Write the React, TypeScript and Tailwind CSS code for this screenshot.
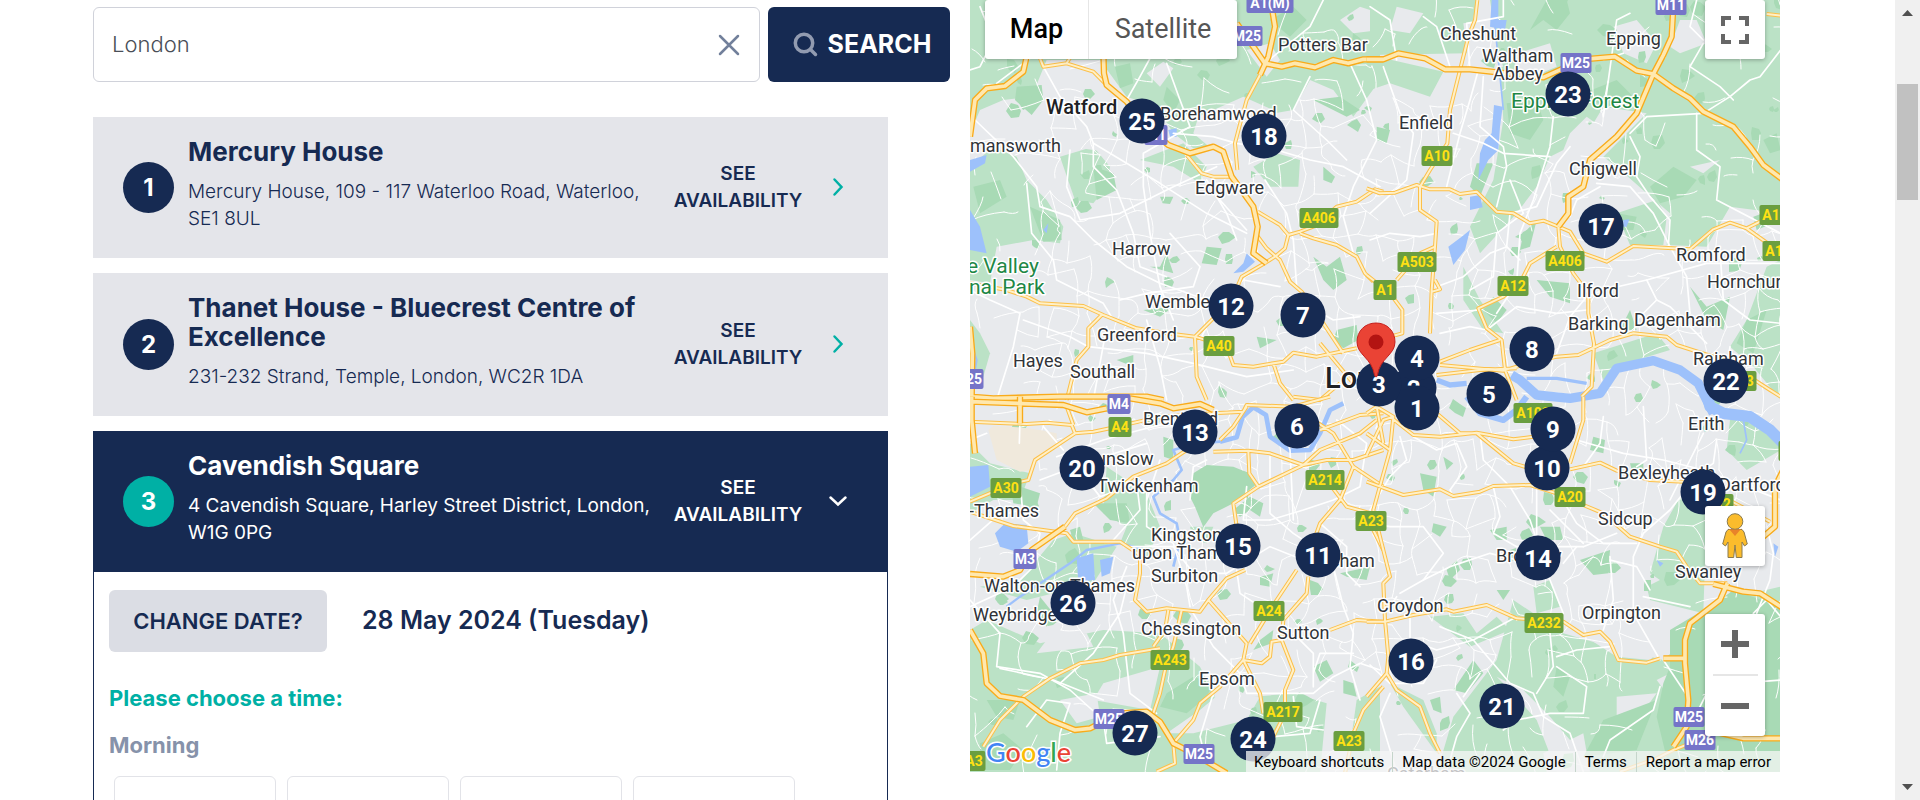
import React, { useState } from "react";

/* ---------- Map geometry ----------
   The map is drawn in four tiles. Tile paths use tile units (3 per map unit). */

type Tile = {
  at: string;
  light: string[];
  urban: string[];
  dark: string[];
  lakes: string[];
  rivers: { d: string; w: number }[];
  streets: string[];
  primary: string[];
  motorway: string[];
};

const TILES: Tile[] = [
  {
    at: "translate(960 0) scale(0.33333)",
    light: [
      "M30 0H1260V240L1180 350L1120 270L1050 240L1000 330L880 350L840 420L780 440L700 445L640 400L590 320L500 290L420 180L260 180L215 290L130 300L60 330L30 400Z",
      "M30 500L100 440L170 470L200 540L260 600L310 680L300 730L220 720L110 740L90 850L30 840Z",
      "M540 480L670 430L740 500L720 550L640 500Z",
      "M880 500L950 460L1020 480L1015 560L930 560Z",
      "M300 470L400 440L450 500L440 560L400 610L345 600Z",
      "M30 960L60 1000L90 1060L70 1130L30 1130Z",
    ],
    urban: [
      "M255 190L390 220L430 260L500 310L540 400L470 460L330 440L290 360L240 330Z",
      "M560 220L610 185L640 205L600 260Z",
      "M715 350L850 290L940 330L1000 400L900 480L840 520L700 400Z",
      "M860 150L930 130L960 180L920 230Z",
      "M1140 60L1200 20L1260 40V90L1180 100Z",
      "M60 360L120 330L140 380L80 420Z",
    ],
    dark: [
      "M170 260L245 255L250 300L215 345L165 300Z",
      "M465 200L510 190L520 250L480 265Z",
      "M210 620L300 660L305 720L250 725Z",
      "M600 590L640 590L630 612L608 610Z",
      "M1060 770L1100 800L1140 770L1160 840L1120 870L1090 840Z",
      "M740 740L785 745L770 795L725 790Z",
      "M1090 500L1125 530L1115 550L1090 540Z",
      "M1130 990L1190 975L1195 1020L1150 1045L1120 1020Z",
      "M400 500L460 520L470 570L410 600Z",
      "M550 930L640 920L600 950Z",
      "M890 1010L950 1020L900 1045Z",
      "M1060 300L1140 290L1200 330L1160 350Z",
      "M640 820L620 760L600 800L570 800Z",
      "M470 1080L520 1065L520 1100Z",
      "M930 60L1000 20L1040 60L990 110Z",
      "M620 260L660 300L640 340L610 300Z",
      "M40 560L120 540L140 590L60 640Z",
    ],
    lakes: [
      "M30 630L60 680L80 760L30 750Z",
      "M820 820L850 790L860 760L885 785L850 815Z",
      "M30 480L80 465L75 490L30 515Z",
      "M625 390L650 385L650 410L630 410Z",
      "M250 690L265 670L260 700Z",
    ],
    rivers: [{ d: "M30 1020L50 1080L40 1140", w: 6 }],
    streets: [
      "M250 200L300 290L380 380L400 430L400 500L470 570L520 700L540 800L620 830",
      "M45 360L160 470L230 560L240 620L330 650L400 720L500 800L600 850L740 900",
      "M30 870L90 900L180 940L160 1040L110 1200",
      "M200 550L215 700L280 780L290 840L430 910L460 960",
      "M400 430L600 550L740 640L860 700",
      "M620 190L660 300L690 380L620 420L550 460L550 560L570 700L600 860L640 960",
      "M640 400L760 410L830 430L950 450L1050 480L1150 500L1260 560",
      "M740 0L720 60L600 120L540 230L500 300",
      "M915 190L1050 80L1090 0",
      "M1170 190L1220 300L1250 420L1180 560L1150 650L1180 760",
      "M915 540L980 640L1000 720L1010 860L1050 920L1120 960L1200 950",
      "M780 600L860 690M740 540L800 640L830 720",
      "M630 700L720 800L700 860L560 880L480 900",
      "M190 960L330 1010L385 1040L560 1060L700 1090L860 1130L1000 1110",
      "M440 980L420 1090L400 1200M560 960L600 1100L620 1200",
      "M720 1020L780 900L850 840L960 860",
      "M1050 230L1000 330L1100 420L1160 480",
      "M60 20L100 120L60 200L30 210M210 175L110 250",
      "M330 450L320 560L360 660L480 640L640 560L770 500",
    ],
    primary: [
      "M240 175L250 200L320 190L400 215L440 255",
      "M320 190L335 165",
      "M900 225L860 300L838 380L825 430L832 510",
      "M680 465L725 520L760 530L810 530",
      "M893 635L960 675L985 705L975 745L945 770L905 795L845 830L830 865L765 950L705 1010L710 1130L740 1200",
      "M985 705L1020 695L1060 680L1130 620L1190 605L1245 568L1270 575",
      "M1020 700L1060 715L1130 735L1190 770L1215 820L1240 845",
      "M890 705L920 745L960 780L990 845L1025 875L1090 970L1150 1060",
      "M30 850L140 870L200 890L240 910L370 918L430 945L530 985L620 1000L705 1010L800 1040L820 1095L880 1100L970 1085L1000 1058L1070 1070L1190 1045",
      "M425 945L385 985L385 1040L350 1080L320 1200",
      "M940 1090L960 1150L1000 1200",
      "M1080 1030L1130 1090L1180 1150",
      "M1000 1190L1080 1200L1140 1150",
    ],
    motorway: [
      "M30 410L45 300L80 265L135 258L190 215L200 170V60",
      "M430 150L432 220L440 255L500 305L560 380L625 435L690 460L760 440L790 455L815 530L880 620L893 680L880 760L920 790",
      "M935 20L945 80L925 170L900 225",
      "M830 70L880 140L915 190L965 200L1005 190L1065 202L1120 180L1165 190L1210 178H1270",
      "M30 1190L100 1195L300 1190L560 1190L610 1200",
      "M30 980L37 1060L35 1200",
    ],
  },
  {
    at: "translate(1370 0) scale(0.33333)",
    light: [
      "M0 0H320L290 160L0 165Z",
      "M0 165L220 215L180 290L60 250L0 270Z",
      "M360 0H1232V640L1080 620L1010 740L890 735L900 640L830 580L740 500L700 470L830 340L700 320L640 420L540 470L500 560L440 640L330 760L300 680L370 540L400 360L390 200Z",
      "M740 640L860 600L890 650L880 735L780 735Z",
      "M280 800L330 900L400 1000L340 990L280 900Z",
      "M1190 800L1232 780V1200L1150 1100L1080 1040L1130 960Z",
      "M670 1060L860 1000L900 1050L800 1080L700 1140Z",
    ],
    urban: [
      "M280 70L350 60L400 200L300 210Z",
      "M440 160L540 130L560 200L500 225L430 220Z",
      "M730 80L800 60L860 130L830 190L760 160Z",
      "M600 400L650 350L720 400L650 470L560 500Z",
      "M80 20L160 40L120 100L60 90Z",
      "M1050 480L1000 520L960 500Z",
      "M980 60L1010 130L930 160L900 140L930 60Z",
    ],
    dark: [
      "M410 310L500 300L520 360L480 420L420 400Z",
      "M910 500L980 540L940 590L870 610L840 560Z",
      "M640 280L740 240L800 300L700 320Z",
      "M500 660L480 740L450 750L460 700Z",
      "M500 840L600 850L600 910L540 890Z",
      "M370 890L410 930L380 970L340 930Z",
      "M960 860L1010 920L1080 890L1060 990L1010 960Z",
      "M740 640L800 650L790 690L735 690Z",
      "M1130 960L1190 930L1150 1060L1100 1030Z",
      "M320 490L370 490L330 590L300 560Z",
      "M780 930L800 990L750 990Z",
      "M1150 650L1232 620V660L1160 690Z",
      "M20 380L60 390L50 430L20 420Z",
      "M530 0L480 90L520 60L560 90L600 40L590 0Z",
      "M1180 420L1220 400L1232 450L1200 460Z",
    ],
    lakes: [
      "M372 315L398 320L390 380L385 450L355 480L325 540L330 460L345 420L365 400Z",
      "M365 0H385V60L410 60L405 90L360 80Z",
      "M300 590L330 585L338 622L300 630Z",
      "M235 740L275 710L300 690L285 750L250 795Z",
      "M760 660L778 658L770 680L760 680Z",
    ],
    rivers: [
      { d: "M425 1125L450 1140L500 1185L600 1195L690 1180L740 1105L850 1082L930 1110L985 1150L1030 1240", w: 28 },
      { d: "M200 1140L240 1155L290 1150", w: 16 },
      { d: "M470 1135H560L650 1150", w: 10 },
      { d: "M400 330L390 230L375 80", w: 5 },
    ],
    streets: [
      "M325 210L300 300L270 400L230 560M340 230L330 380L400 440L410 500L380 620",
      "M550 350L540 440L490 600L450 700L440 850L380 940",
      "M40 200L90 340L130 400L110 540L0 640",
      "M250 400L340 430L400 460L540 470",
      "M600 440L560 490L500 620L420 640L410 740L450 780",
      "M690 560L620 600L600 650M680 550L780 560L850 640L900 740L950 830L960 940",
      "M780 400L830 350L1000 340L1080 290L1140 240L1170 230L1232 150",
      "M1000 130L960 200L1050 260L1090 300",
      "M980 0L960 80L1000 120",
      "M780 410L810 470L800 530L840 590L900 660L895 740",
      "M980 340L980 450L1050 500L1040 600L1232 700",
      "M300 210L290 70L400 50L400 0",
      "M0 20L60 60L80 180M160 50L200 80L240 200",
      "M830 840L700 870L650 890L600 950L560 1060",
      "M830 840L860 900L800 960L790 1000M830 840L1010 790L1232 790",
      "M200 860L280 830L360 760L410 740M200 940L330 930",
      "M1050 750L1060 900L1140 960L1232 970",
      "M1010 1030L900 920L860 900M1080 1040L1060 1180",
      "M0 720L60 700L150 710L200 700",
      "M210 1000L300 980L350 990L440 920L560 940L650 930",
      "M700 350L740 60L780 40M700 180L760 160",
      "M420 540L460 640L380 700L370 830L300 870",
    ],
    primary: [
      "M322 0L315 60L295 110L270 210L240 330L232 430L180 510L150 560V630L200 665L195 740L185 870L180 1000",
      "M-10 565L30 580L75 578L140 555L180 568L240 568L270 582L320 575L380 635L430 640L480 670L520 662L565 680L600 695L640 760L710 785L790 738L960 748L1030 688L1080 668L1130 685L1200 650",
      "M1130 685L1200 735",
      "M565 680L570 740L610 820L655 880V940L672 1030L665 1160L635 1190",
      "M560 740L480 790L455 840L400 890L325 925L350 985L395 1020L405 1110L440 1200",
      "M210 1085L300 1050L390 1020",
      "M210 1095L400 1112L440 1100L560 1070L625 1065L720 1020L790 1000L890 1010L920 1035L1060 1080L1200 1170L1240 1195",
      "M200 1125L330 1110L440 1105",
      "M195 740L150 760L80 840M-10 825L60 880L97 930V1000L60 1010",
      "M195 840L210 868L187 875",
      "M1190 42L1240 48",
    ],
    motorway: [
      "M-10 178H40L85 160L165 175L225 208H300L520 232L580 205L640 178L735 170L800 212L850 222L910 265L960 295L1000 335L1090 380L1140 440L1180 495L1240 540",
      "M910 20L905 110L880 165L850 222L800 340L740 410L660 480L640 560L595 590V640L565 680",
    ],
  },
  {
    at: "translate(960 400) scale(0.33333)",
    light: [
      "M30 130L90 190L210 220L180 300L100 300L30 340Z",
      "M30 690L80 660L240 730L430 690L600 700L720 800L770 900L1000 880L1100 910L1080 1120H30Z",
      "M280 420L340 400L470 440L400 550L200 600L60 560L180 540Z",
      "M690 380L760 380L740 430L700 420Z",
      "M1190 900L1260 860V1110H1160Z",
      "M440 200L560 280L600 380L560 480L480 430L500 380L430 340Z",
    ],
    urban: [
      "M430 850L600 800L570 930L400 900Z",
      "M230 760L400 740L380 700L260 720Z",
      "M620 1000L720 930L780 880L900 890L860 960L700 1000Z",
      "M300 900L410 880L420 950L350 970Z",
    ],
    dark: [
      "M820 330L870 290L910 310L900 350L870 330L840 350Z",
      "M620 880L700 830L760 850L740 890L680 940L600 920Z",
      "M900 720L940 690L935 730L880 750Z",
      "M80 900L180 900L160 960L110 950Z",
      "M1140 520L1230 500L1220 540L1160 530Z",
      "M900 530L940 520L930 560L900 555Z",
      "M610 110L640 120L640 180L612 170Z",
      "M1060 800L1100 780L1120 820L1080 845Z",
      "M1150 840L1180 850L1190 890L1150 880Z",
      "M840 210L870 220L860 240L840 236Z",
      "M960 90L940 110L960 140L990 120Z",
      "M1040 60L1070 50L1060 110L1035 100Z",
      "M150 250L240 280L230 320L160 310Z",
      "M400 310L500 310L510 370L450 360Z",
      "M330 390L360 380L370 420L340 420Z",
      "M60 1030L130 1000L190 1050L150 1110H60Z",
      "M240 590L280 640L260 680L230 640Z",
    ],
    lakes: [
      "M30 200L85 195L90 260L30 290Z",
      "M105 400L135 370L200 375L205 430L170 455L120 440Z",
      "M350 475L400 460L405 540L355 545Z",
      "M420 480L460 470L450 520L425 530Z",
    ],
    rivers: [
      { d: "M780 125L830 112L848 50L880 22L918 45L930 110L990 152L1050 150L1080 100L1110 30L1150 10", w: 14 },
      { d: "M780 125L710 130L640 150L665 210L640 240L580 290L600 340L650 370L660 420L640 500", w: 8 },
      { d: "M560 450L480 430L380 450L330 490L270 530L180 590L140 620", w: 7 },
    ],
    streets: [
      "M30 120L80 100M290 170L430 120L540 90L620 70",
      "M240 240L400 180L560 130",
      "M350 200L420 290L530 250L540 330L460 420",
      "M180 240L190 360L240 400L220 500L160 560L30 620",
      "M30 600L120 700L110 800L240 820L330 870L430 960",
      "M120 805L280 840L430 900M500 560L480 640L400 760L300 850",
      "M500 440L640 440L700 520L800 520L930 440L1030 480",
      "M500 500L460 600L490 700L510 880L590 940",
      "M560 260L560 380L640 430L680 560L690 620",
      "M930 170L930 340L1000 400L1060 440L1040 510",
      "M860 260L850 360L930 360M960 60L990 150L1000 360",
      "M1080 370L1160 440L1160 520L1200 560M1120 500L1150 620L1180 700L1170 800L1200 900",
      "M830 510L840 580L900 620M700 640L760 740L840 820L860 880L960 880L1060 880L1120 830L1200 790L1260 810",
      "M1060 820L1080 760L1180 760M1000 700L1060 760L1060 860",
      "M740 180L700 200L690 300M600 180L560 300",
      "M30 420L110 350L180 330M180 60L178 130M250 80L310 150",
      "M1130 60L1220 130L1200 260L1120 300L1030 330L930 360",
      "M200 980L260 900L330 910L300 1000L290 1110",
      "M430 960L440 1030L600 1010M760 880L720 1010L740 1090",
      "M1000 890L1010 980L1090 990M1080 900L1050 1000L940 1010",
    ],
    primary: [
      "M30 65L200 72L260 68L335 75L345 100L400 95L450 85L600 50L760 40L850 35L860 15L1000 20L1110 -10",
      "M320 20L340 75",
      "M30 305L160 250L205 240L225 180L345 100",
      "M30 335L160 378L320 400L340 425L480 425L540 465V520L525 600L560 635L620 625L720 635L745 600L800 535L855 510",
      "M315 380L345 340L440 295L520 230L620 190L680 150",
      "M760 155L865 152L930 160L1030 195L1100 180H1180L1270 150",
      "M780 120L820 80L860 20",
      "M865 155L868 220L895 260L1030 195",
      "M895 260L820 310L830 380",
      "M745 600L860 730L850 780L900 880L910 940",
      "M1010 510L950 600L870 730",
      "M1045 530L1040 580L970 660L965 720L935 725L930 770L905 790L850 780",
      "M965 720L1000 810L975 870V940L940 1010",
      "M850 780L780 860L720 910L700 960L640 1030L645 1090L590 1115",
      "M625 630L615 690L580 740",
      "M665 630L640 740L615 810L600 880L580 940",
      "M600 745L480 765L430 780L360 790L270 835L190 890L120 960L70 1040",
      "M1060 60L1120 100L1180 200L1140 300L1080 370L1055 440",
      "M1030 195L1080 150L1200 100L1250 60",
      "M1080 90L1200 45L1270 40",
      "M1180 200L1270 260",
      "M1100 240L1160 320L1270 350",
      "M1110 690L1190 660L1270 665",
      "M1270 860L1210 930L1180 1000L1155 1120",
      "M1225 360L1270 450",
    ],
    motorway: [
      "M35 -10V60L45 160",
      "M180 -10V70",
      "M30 5L310 15L380 37L440 25",
      "M510 -5L600 10L640 25L720 12L760 30",
      "M30 522L130 530L180 510L215 450L315 380",
      "M30 690L70 760L80 850L120 888L190 900L270 960L345 990L390 985L480 940L560 935L600 965L640 1030L700 1060L800 1120",
    ],
  },
  {
    at: "translate(1370 400) scale(0.33333)",
    light: [
      "M430 600L580 700L720 740L880 780L945 720L1060 600L1232 560V1120H200L250 950L380 780Z",
      "M840 520L880 380L930 290L1010 330L1000 640L840 600L830 560L870 540Z",
      "M1080 60L1140 40L1232 110V150L1130 210L1070 150Z",
      "M490 560L540 540L570 620L500 640Z",
      "M180 650L280 640L320 700L380 650L420 690L300 740Z",
      "M60 850L160 900L200 1000L200 1060L100 920Z",
    ],
    urban: [
      "M380 830L460 870L540 950L600 1020L620 1115L560 1115L500 960L420 870Z",
      "M600 680L740 690L860 760L840 780L740 770Z",
      "M740 890L860 880L830 920L740 950Z",
      "M520 1060L640 1000L660 1115H530Z",
      "M860 840L900 820L890 880Z",
    ],
    dark: [
      "M900 690L1050 600L1090 570L1232 620V1115H900L860 950L880 850L900 800Z",
      "M630 480L720 450L715 520L670 525Z",
      "M510 380L570 380L580 420L530 420Z",
      "M190 370L230 380L210 410L185 395Z",
      "M360 390L410 380L410 420L380 420Z",
      "M150 220L200 230L190 290L160 270Z",
      "M220 170L250 190L230 210Z",
      "M260 480L230 510L240 540L270 510Z",
      "M670 110L705 120L700 160L660 150Z",
      "M560 800L600 830L580 890L550 860Z",
      "M310 780L340 820L290 880L250 870Z",
      "M700 960L860 900L800 1050L640 1070Z",
      "M380 570L420 570L400 600Z",
      "M780 190L820 190L820 230L790 230Z",
      "M180 900L210 890L215 940L190 930Z",
    ],
    lakes: ["M860 480L880 490L870 500Z", "M1210 430L1225 440L1215 470Z"],
    rivers: [
      { d: "M1005 -40L1020 20L1060 40L1140 50L1200 90L1245 135", w: 34 },
      { d: "M290 -10L330 40L400 60L440 30L470 -10", w: 18 },
      { d: "M1120 60L1130 120L1110 160", w: 5 },
    ],
    streets: [
      "M90 110L110 180L60 230L0 330M130 110L200 150L260 130L290 200L240 270L250 290",
      "M330 100L340 180L420 260L480 360L500 420",
      "M370 260L390 350L370 400L440 440L640 440",
      "M510 10L500 250L500 410L540 540L580 640M560 270L620 370L700 430L800 430",
      "M620 120L760 160L880 180L1000 210L1232 300",
      "M700 50L690 130L640 200M820 20L830 180L800 200",
      "M940 280L900 330L820 400L790 470L790 640L870 780",
      "M720 470L730 600L700 690M640 440L740 400",
      "M620 440L580 490M820 590L960 620",
      "M0 370L60 380L160 380L220 460L160 540L90 580",
      "M160 540L240 500L360 460L440 480",
      "M80 590L60 620M120 650L120 720L200 750L310 720L440 650",
      "M210 680L310 720L420 850L490 880L520 950L600 1000L640 1115",
      "M540 700L550 800L500 880M440 660L420 640",
      "M560 770L620 750L720 740",
      "M880 780L940 870L960 900M870 860L850 930L720 1020L700 1070",
      "M60 880L30 950L80 1115M260 880L300 940L260 1010L230 1115",
      "M400 990L440 960L540 940L640 940L650 860L560 800",
      "M330 820L280 890M0 795L60 850L160 850L200 780",
      "M1000 100L960 180L900 300M1040 120L1030 190L1000 210",
      "M1150 640L1190 600L1232 650M1050 470L1080 530",
      "M980 940L1010 880L1100 850L1232 840",
      "M840 570L800 500L720 480M540 330L640 430",
      "M1180 340L1210 460L1200 540L1160 640",
    ],
    primary: [
      "M200 40L270 100H320L430 190L480 205",
      "M60 50L130 105L210 110L320 98L430 118L490 110",
      "M640 -10V60L600 190",
      "M600 208L690 188L740 212L840 240L940 245L1000 260L1200 365",
      "M-10 245L100 285L210 268L250 288L330 275L370 258L480 255L560 280L640 315L700 340L780 410L870 440L920 455L950 500L990 550H1072",
      "M70 50L60 150L10 330L60 530L40 550L45 660L55 770L50 820L80 870L150 920L180 1000L210 1060",
      "M-10 165L40 60L70 50L20 20L-10 40",
      "M20 20L40 130M-10 100L60 150",
      "M-10 665H45L130 645L230 628L250 635L350 615L440 655L580 665L640 705L690 695L720 725L745 780L830 788L870 775",
      "M50 820L-10 890",
      "M750 1115L860 1075L910 1050L960 1030",
    ],
    motorway: [
      "M1030 552L1120 575L1170 580L1240 625",
      "M1072 550L1050 600L960 670L945 720V790L955 900L950 980L910 1040",
      "M1240 210L1215 260V380L1180 410L1140 430",
      "M880 775H945",
      "M1010 990L1120 1015H1240",
    ],
  },
];

const AIRPORT = "M85 90L100 78L180 82L240 90L290 100L290 140L230 170L220 210L180 215L140 195L110 180Z";
const DEER_PARK = "M700 220L740 195L820 200L868 220L893 250L820 310L760 340L730 382L705 320L690 290Z";

/* Deterministic lattice of local streets and small parks. */
function makeRandom(seed: number) {
  let s = seed;
  return () => {
    s = (s * 1664525 + 1013904223) % 4294967296;
    return s / 4294967296;
  };
}

function buildStreets(): string {
  const rnd = makeRandom(7);
  const step = 19;
  const cols = 46;
  const rows = 44;
  const pts: number[][][] = [];
  for (let r = 0; r < rows; r++) {
    pts.push([]);
    for (let c = 0; c < cols; c++) {
      pts[r].push([
        Math.round(960 + c * step + (rnd() - 0.5) * 16),
        Math.round(-10 + r * step + (rnd() - 0.5) * 16),
      ]);
    }
  }
  const link = (a: number[], b: number[]) => {
    const mx = Math.round((a[0] + b[0]) / 2 + (rnd() - 0.5) * 9);
    const my = Math.round((a[1] + b[1]) / 2 + (rnd() - 0.5) * 9);
    return `M${a[0]} ${a[1]}Q${mx} ${my} ${b[0]} ${b[1]}`;
  };
  let d = "";
  for (let r = 0; r < rows - 1; r++) {
    for (let c = 0; c < cols - 1; c++) {
      const [x, y] = pts[r][c];
      const rural = x < 1040 || y > 680 || (x > 1560 && y < 200) || y < 100 || (x > 1620 && y > 560);
      const keep = rural ? 0.2 : 0.58;
      if (rnd() < keep) d += link(pts[r][c], pts[r][c + 1]);
      if (rnd() < keep) d += link(pts[r][c], pts[r + 1][c]);
    }
  }
  return d;
}

function buildParks(): string {
  const rnd = makeRandom(23);
  let d = "";
  for (let i = 0; i < 170; i++) {
    const cx = 970 + rnd() * 810;
    const cy = rnd() * 772;
    const r = 2 + rnd() * 6;
    for (let k = 0; k < 6; k++) {
      const a = (k / 6) * Math.PI * 2;
      const q = r * (0.6 + rnd() * 0.8);
      d += `${k ? "L" : "M"}${Math.round(cx + Math.cos(a) * q)} ${Math.round(cy + Math.sin(a) * q)}`;
    }
    d += "Z";
  }
  return d;
}

const LOCAL_STREETS = buildStreets();
const LOCAL_PARKS = buildParks();

type Label = [string, number, number];
const TOWNS: Label[] = [
  ["Borehamwood", 1160, 120], ["mansworth", 970, 152], ["Edgware", 1195, 194], ["Harrow", 1112, 255],
  ["Wembley", 1145, 308], ["Greenford", 1097, 341], ["Hayes", 1013, 367], ["Southall", 1070, 378],
  ["Potters Bar", 1278, 51], ["Cheshunt", 1440, 40], ["Waltham", 1482, 62], ["Abbey", 1493, 80],
  ["Epping", 1606, 45], ["Enfield", 1399, 129], ["Chigwell", 1569, 175], ["Romford", 1676, 261],
  ["Hornchurch", 1707, 288], ["Ilford", 1577, 297], ["Barking", 1568, 330], ["Dagenham", 1634, 326],
  ["Rainham", 1693, 365], ["Brentford", 1143, 425], ["Hounslow", 1073, 465], ["Twickenham", 1097, 492],
  ["-Thames", 969, 517], ["Kingston", 1151, 541], ["upon Thames", 1132, 559], ["Surbiton", 1151, 582],
  ["Walton-on-Thames", 984, 592], ["Weybridge", 973, 621], ["Chessington", 1141, 635],
  ["Sutton", 1277, 639], ["Epsom", 1199, 685], ["Mitcham", 1304, 567], ["Erith", 1688, 430],
  ["Bexleyheath", 1618, 479], ["Dartford", 1719, 491], ["Sidcup", 1598, 525], ["Bromley", 1496, 562],
  ["Swanley", 1675, 578], ["Croydon", 1377, 612], ["Orpington", 1582, 619], ["Caterham", 1387, 780],
];
const PARK_LABELS: Label[] = [
  ["e Valley", 967, 273],
  ["nal Park", 969, 294],
  ["Epping Forest", 1511, 108],
];

const SHIELDS: Label[] = [
  ["A406", 1319, 218], ["A10", 1437, 156], ["A503", 1417, 262], ["A1", 1385, 290], ["A12", 1513, 286],
  ["A406", 1565, 261], ["A12", 1775, 215], ["A127", 1782, 251], ["M25", 1576, 63], ["M11", 1671, 5],
  ["M25", 1247, 36], ["A1(M)", 1270, 3], ["M1", 1156, 135], ["A40", 1219, 346], ["M25", 968, 379],
  ["M4", 1119, 404], ["A4", 1120, 427], ["A30", 1006, 488], ["M3", 1025, 559], ["A243", 1170, 660],
  ["M25", 1109, 719], ["M25", 1199, 754], ["A217", 1283, 712], ["A23", 1349, 741], ["A24", 1269, 611],
  ["A3", 974, 761], ["A214", 1325, 480], ["A23", 1371, 521], ["A20", 1570, 497], ["A102", 1533, 413],
  ["A232", 1544, 623], ["M25", 1689, 717], ["M26", 1700, 740], ["A13", 1741, 381], ["A2", 1722, 504],
  ["A2", 1790, 451],
];

const MARKERS: [number, number, number][] = [
  [25, 1142, 121], [18, 1264, 136], [12, 1231, 306], [7, 1303, 315], [23, 1568, 94], [17, 1601, 226],
  [2, 1414, 388], [4, 1417, 358], [3, 1379, 384], [1, 1417, 408], [5, 1489, 394], [8, 1532, 349],
  [22, 1726, 381], [6, 1297, 426], [13, 1195, 432], [20, 1082, 468], [10, 1547, 468], [9, 1553, 429],
  [19, 1703, 492], [15, 1238, 546], [11, 1318, 555], [14, 1538, 558], [26, 1073, 603], [16, 1411, 661],
  [21, 1502, 706], [27, 1135, 733], [24, 1253, 739],
];

const place = (x: number, y: number) => ({
  left: `${((x - 970) / 810) * 100}%`,
  top: `${(y / 772) * 100}%`,
});

function MapArt() {
  return (
    <svg
      className="absolute inset-0 h-full w-full"
      viewBox="970 0 810 772"
      preserveAspectRatio="xMidYMid slice"
      aria-hidden="true"
    >
      <rect x="970" y="0" width="810" height="772" fill="#e8eaed" />
      {TILES.map((t) => (
        <g key={t.at} transform={t.at}>
          {t.light.map((d) => <path key={d} d={d} fill="#bbe2c6" />)}
          {t.urban.map((d) => <path key={d} d={d} fill="#e8eaed" />)}
          {t.dark.map((d) => <path key={d} d={d} fill="#a8dab5" />)}
        </g>
      ))}
      <path d={LOCAL_PARKS} fill="#a8dab5" />
      <path d={LOCAL_STREETS} fill="none" stroke="#ffffff" strokeWidth="1" strokeLinecap="round" />
      <path d={AIRPORT} transform={TILES[2].at} fill="#f0e9dc" />
      <path d={DEER_PARK} transform={TILES[2].at} fill="#a8dab5" />
      {TILES.map((t) => (
        <g key={t.at} transform={t.at} fill="#9dc1fb">
          {t.lakes.map((d) => <path key={d} d={d} />)}
          {t.rivers.map((r) => (
            <path key={r.d} d={r.d} fill="none" stroke="#9dc1fb" strokeWidth={r.w} strokeLinejoin="round" />
          ))}
        </g>
      ))}
      {TILES.map((t) => (
        <g key={t.at} transform={t.at} fill="none" strokeLinejoin="round" strokeLinecap="round">
          {t.streets.map((d) => <path key={d} d={d} stroke="#ffffff" strokeWidth="5" />)}
        </g>
      ))}
      {TILES.map((t) => (
        <g key={t.at} transform={t.at} fill="none" strokeLinejoin="round">
          <path d={t.primary.join("")} stroke="#fcc04a" strokeWidth="12" />
          <path d={t.primary.join("")} stroke="#fff0c7" strokeWidth="6" />
          <path d={t.motorway.join("")} stroke="#f9ab1a" strokeWidth="19" />
          <path d={t.motorway.join("")} stroke="#ffe8ae" strokeWidth="11" />
        </g>
      ))}
      <g fontFamily="Roboto, sans-serif" stroke="#ffffff" strokeWidth="3" strokeLinejoin="round" paintOrder="stroke">
        {SHIELDS.map(([name, x, y]) => {
          const w = name.length * 8 + 7;
          const blue = name[0] === "M" || name === "A1(M)";
          return (
            <g key={`${name}-${x}`} stroke="none">
              <rect x={x - w / 2} y={y - 10} width={w} height="20" rx="2" fill={blue ? "#7574c8" : "#6a9e40"} />
              <text
                x={x}
                y={y + 5}
                textAnchor="middle"
                fontSize="14"
                fontWeight="700"
                fill={blue ? "#ffffff" : "#ffe114"}
              >
                {name}
              </text>
            </g>
          );
        })}
        {TOWNS.map(([name, x, y]) => (
          <text key={name} x={x} y={y} fontSize="18" fill="#303338">{name}</text>
        ))}
        {PARK_LABELS.map(([name, x, y]) => (
          <text key={name} x={x} y={y} fontSize="21" fill="#1e8745">{name}</text>
        ))}
        <text x="1046" y="114" fontSize="20" fontWeight="500" fill="#202124">Watford</text>
        <text x="1325" y="388" fontSize="29" fontWeight="500" fill="#202124">London</text>
      </g>
    </svg>
  );
}

function Pegman() {
  return (
    <svg width="26" height="46" viewBox="0 0 26 46" aria-hidden="true">
      <g fill="#fbbc2c" stroke="#8a7a4e" strokeWidth="1">
        <path d="M6 16.5H20L22 19L25.3 31L22.5 33L20 29V44.5H14.3L13 32L11.7 44.5H6V29L3.5 33L0.7 31L4 19Z" />
        <circle cx="13" cy="8.5" r="7.8" />
      </g>
      <path d="M7.5 16.5H18.5L13 23Z" fill="#e8832a" />
      <path d="M6 15.5Q13 19 20 15.5L17 17.5H9Z" fill="#e8832a" />
    </svg>
  );
}

const CARD = "rounded-[3px] bg-white shadow-[0_1px_4px_rgba(0,0,0,0.3)]";

function MapPanel() {
  return (
    <section
      aria-label="Clinic map"
      className="relative h-[772px] min-w-0 flex-[810_1_0%] overflow-hidden font-[Roboto,sans-serif]"
    >
      <MapArt />
      {MARKERS.map(([n, x, y]) => (
        <button
          key={n}
          style={place(x, y)}
          className="absolute flex size-[45px] -translate-x-1/2 -translate-y-1/2 items-center justify-center rounded-full bg-[#162a52] text-2xl font-bold text-white"
        >
          {n}
        </button>
      ))}
      <svg
        style={place(1376, 378)}
        className="absolute -translate-x-1/2 -translate-y-full"
        width="40"
        height="56"
        viewBox="0 0 40 56"
        aria-hidden="true"
      >
        <path
          d="M20 1C9 1 1 9 1 20C1 33 16 36 18.5 53Q20 57 21.5 53C24 36 39 33 39 20C39 9 31 1 20 1Z"
          fill="#ea4335"
          stroke="#c5221f"
          strokeWidth="1"
        />
        <circle cx="20" cy="20" r="7.5" fill="#b31412" />
      </svg>

      <div className={`absolute left-[15px] top-0 flex h-[59px] text-[27px] ${CARD}`}>
        <button className="w-[104px] border-r border-[#e6e6e6] font-medium text-black">Map</button>
        <button className="w-[148px] text-[#565656]">Satellite</button>
      </div>

      <button aria-label="Toggle fullscreen view" className={`absolute right-[15px] top-0 flex h-[59px] w-[60px] items-center justify-center ${CARD}`}>
        <svg width="28" height="28" viewBox="0 0 28 28" fill="none" stroke="#666666" strokeWidth="4" aria-hidden="true">
          <path d="M2 10V2H10M18 2H26V10M26 18V26H18M10 26H2V18" />
        </svg>
      </button>

      <div className="absolute bottom-9 right-[15px] flex flex-col gap-12">
        <button aria-label="Drag Pegman onto the map" className={`flex size-[60px] items-center justify-center ${CARD}`}>
          <Pegman />
        </button>
        <div className={`flex flex-col items-center ${CARD}`}>
          <button aria-label="Zoom in" className="flex h-[60px] w-[60px] items-center justify-center">
            <svg width="28" height="28" viewBox="0 0 28 28" fill="#666666" aria-hidden="true">
              <path d="M11 0H17V11H28V17H17V28H11V17H0V11H11Z" />
            </svg>
          </button>
          <span className="h-0.5 w-[45px] bg-[#e6e6e6]" />
          <button aria-label="Zoom out" className="flex h-[60px] w-[60px] items-center justify-center">
            <svg width="28" height="6" viewBox="0 0 28 6" fill="#666666" aria-hidden="true">
              <path d="M0 0H28V6H0Z" />
            </svg>
          </button>
        </div>
      </div>

      <a
        href="#google"
        className="absolute bottom-0.5 left-4 font-[Lato,sans-serif] text-[27px] font-medium leading-9 [-webkit-text-stroke:3px_white] [paint-order:stroke_fill]"
      >
        <span className="text-[#4285f4]">G</span>
        <span className="text-[#ea4335]">o</span>
        <span className="text-[#fbbc04]">o</span>
        <span className="text-[#4285f4]">g</span>
        <span className="text-[#34a853]">l</span>
        <span className="text-[#ea4335]">e</span>
      </a>

      <div className="absolute bottom-0 right-0 flex h-[21px] items-center divide-x divide-[#c5d5cb] bg-[#f5f5f5]/75 text-[15px] leading-5 text-black">
        <button className="px-2 leading-5">Keyboard shortcuts</button>
        <span className="px-[9px]">Map data ©2024 Google</span>
        <a href="#terms" className="px-[9px]">Terms</a>
        <a href="#report" className="px-[9px]">Report a map error</a>
      </div>
    </section>
  );
}

/* ---------- Clinic list ---------- */

type Clinic = { id: number; name: string; address: string };
const CLINICS: Clinic[] = [
  { id: 1, name: "Mercury House", address: "Mercury House, 109 - 117 Waterloo Road, Waterloo, SE1 8UL" },
  { id: 2, name: "Thanet House - Bluecrest Centre of Excellence", address: "231-232 Strand, Temple, London, WC2R 1DA" },
  { id: 3, name: "Cavendish Square", address: "4 Cavendish Square, Harley Street District, London, W1G 0PG" },
];
const SLOTS = ["08:00", "08:15", "08:30", "08:45"];

function ClinicRow({ clinic, open, onToggle }: { clinic: Clinic; open: boolean; onToggle: () => void }) {
  return (
    <div
      className={`flex items-center pl-[30px] pr-10 pt-5 pb-[26px] ${
        open ? "bg-[#162a52] text-white" : "bg-[#e4e5ea] text-[#162a52]"
      }`}
    >
      <span
        className={`mt-1.5 flex size-[51px] shrink-0 items-center justify-center rounded-full text-2xl font-bold text-white ${
          open ? "bg-[#00b0a5]" : "bg-[#162a52]"
        }`}
      >
        {clinic.id}
      </span>
      <div className="ml-3.5 w-[464px]">
        <h2 className="text-[26px] font-bold leading-[29px]">{clinic.name}</h2>
        <p className={`mt-3 text-[19px] leading-[27px] ${open ? "font-normal" : "font-light"}`}>{clinic.address}</p>
      </div>
      <button
        onClick={onToggle}
        aria-expanded={open}
        className="mt-1 ml-auto flex items-center gap-[21px] text-[19px] font-semibold leading-[27px]"
      >
        <span className="w-[138px] text-center">SEE AVAILABILITY</span>
        <svg
          width="20"
          height="20"
          viewBox="0 0 20 20"
          fill="none"
          strokeWidth="2.5"
          strokeLinecap="round"
          className={open ? "stroke-white" : "stroke-[#00b0a5]"}
          aria-hidden="true"
        >
          <path d={open ? "M2.5 6.5L10 13.5L17.5 6.5" : "M6.5 2.5L13.5 10L6.5 17.5"} />
        </svg>
      </button>
    </div>
  );
}

export default function App() {
  const [query, setQuery] = useState("London");
  const [openId, setOpenId] = useState(3);

  return (
    <div className="flex h-screen overflow-hidden bg-white font-[Inter,sans-serif]">
      <main className="flex min-w-0 flex-1 gap-5 pl-[93px] pr-[115px]">
        <div className="min-w-0 flex-[857_1_0%] pt-[7px]">
          <form className="flex gap-2" onSubmit={(e) => e.preventDefault()}>
            <div className="flex h-[75px] min-w-0 flex-1 items-center rounded-md border border-[#d0d2da] pl-[18px] pr-[19px]">
              <input
                aria-label="Location"
                value={query}
                onChange={(e) => setQuery(e.target.value)}
                className="min-w-0 flex-1 text-[22px] font-light text-[#4a4e57] outline-none"
              />
              <button type="button" aria-label="Clear location" onClick={() => setQuery("")}>
                <svg width="22" height="22" viewBox="0 0 22 22" stroke="#72809b" strokeWidth="2.5" strokeLinecap="round" aria-hidden="true">
                  <path d="M2 2L20 20M20 2L2 20" />
                </svg>
              </button>
            </div>
            <button className="flex h-[75px] w-[182px] items-center justify-center gap-2.5 rounded-md bg-[#162a52] pl-1.5 text-[25px] font-bold text-white">
              <svg width="25" height="25" viewBox="0 0 25 25" fill="none" stroke="#929bb0" strokeWidth="3.5" strokeLinecap="round" aria-hidden="true">
                <circle cx="11" cy="11" r="8.7" />
                <path d="M17.5 17.5L22.5 22.5" />
              </svg>
              SEARCH
            </button>
          </form>

          <div className="mr-[62px] mt-[35px] flex flex-col gap-[15px]">
            {CLINICS.map((c) => (
              <article key={c.id}>
                <ClinicRow clinic={c} open={openId === c.id} onToggle={() => setOpenId(openId === c.id ? 0 : c.id)} />
                {openId === c.id && (
                  <div className="border-x border-[#162a52] px-[15px] pb-8 pt-[18px] text-[#162a52]">
                    <div className="flex items-center gap-[35px]">
                      <button className="h-[62px] w-[218px] rounded-md bg-[#dbdde4] text-[22px] font-semibold">CHANGE DATE?</button>
                      <p className="text-[25px] font-semibold">28 May 2024 (Tuesday)</p>
                    </div>
                    <p className="mt-[31px] text-[22px] font-bold leading-[30px] text-[#00b0a5]">Please choose a time:</p>
                    <h3 className="mt-[17px] text-[22px] font-bold leading-[30px] text-[#8692aa]">Morning</h3>
                    <div className="mt-4 flex gap-[11px] pl-[5px]">
                      {SLOTS.map((s) => (
                        <button key={s} aria-label={s} className="h-16 w-[162px] rounded-md border border-[#e2e3e8]" />
                      ))}
                    </div>
                  </div>
                )}
              </article>
            ))}
          </div>
        </div>
        <MapPanel />
      </main>

      <div className="flex w-[25px] shrink-0 flex-col items-center bg-[#f0f0f0]" aria-hidden="true">
        <svg width="11" height="6" viewBox="0 0 11 6" className="mt-2.5 shrink-0 fill-[#505050]">
          <path d="M5.5 0L11 6H0Z" />
        </svg>
        <span className="mt-[68px] h-[116px] w-[21px] shrink-0 bg-[#c1c1c1]" />
        <svg width="11" height="6" viewBox="0 0 11 6" className="mb-2.5 mt-auto shrink-0 fill-[#505050]">
          <path d="M0 0H11L5.5 6Z" />
        </svg>
      </div>
    </div>
  );
}
